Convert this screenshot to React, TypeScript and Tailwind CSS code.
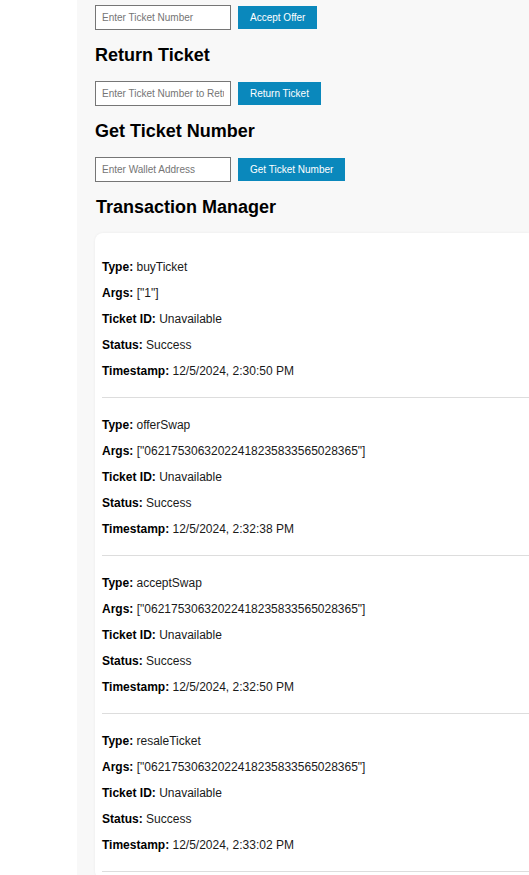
const TRANSACTIONS = [
  { type: "buyTicket", args: '["1"]', ticketId: "Unavailable", status: "Success", timestamp: "12/5/2024, 2:30:50 PM" },
  { type: "offerSwap", args: '["06217530632022418235833565028365"]', ticketId: "Unavailable", status: "Success", timestamp: "12/5/2024, 2:32:38 PM" },
  { type: "acceptSwap", args: '["06217530632022418235833565028365"]', ticketId: "Unavailable", status: "Success", timestamp: "12/5/2024, 2:32:50 PM" },
  { type: "resaleTicket", args: '["06217530632022418235833565028365"]', ticketId: "Unavailable", status: "Success", timestamp: "12/5/2024, 2:33:02 PM" },
];

const inputClass =
  "h-[25px] w-[136px] border border-[#767676] bg-white px-[6px] text-[10px] text-black outline-none placeholder:text-[#757575]";
const buttonClass =
  "h-[23px] bg-[#0a88bc] px-[12px] text-[10px] text-white";
const headingClass = "my-[15px] text-[18px] font-bold leading-[21px] text-black";

function ActionRow({ placeholder, label }: { placeholder: string; label: string }) {
  return (
    <div className="flex items-center gap-[7px]">
      <input type="text" placeholder={placeholder} className={inputClass} />
      <button type="button" className={buttonClass}>
        {label}
      </button>
    </div>
  );
}

function Field({ label, value }: { label: string; value: string }) {
  return (
    <p className="leading-[14px]">
      <span className="font-bold text-black">{label}:</span> {value}
    </p>
  );
}

export default function App() {
  return (
    <div
      className="flex h-[875px] overflow-hidden bg-white text-[12px] text-[#1a1a1a]"
      style={{ fontFamily: '"Liberation Sans", Arial, sans-serif' }}
    >
      <aside className="w-[77px] shrink-0 bg-white" />
      <main className="flex-1 bg-[#f8f8f8] pl-[18px] pt-[5px]">
        <ActionRow placeholder="Enter Ticket Number" label="Accept Offer" />

        <h2 className={headingClass}>Return Ticket</h2>
        <ActionRow placeholder="Enter Ticket Number to Return" label="Return Ticket" />

        <h2 className={headingClass}>Get Ticket Number</h2>
        <ActionRow placeholder="Enter Wallet Address" label="Get Ticket Number" />

        <h2 className={`${headingClass} pl-px`}>Transaction Manager</h2>
        <div className="rounded-l-lg bg-white p-[7px] pr-0 shadow-[0_0_3px_rgba(0,0,0,0.06)]">
          <ul>
            {TRANSACTIONS.map((tx) => (
              <li
                key={tx.timestamp}
                className="flex flex-col gap-[12px] border-b border-[#dddddd] pb-[19px] pt-[20px]"
              >
                <Field label="Type" value={tx.type} />
                <Field label="Args" value={tx.args} />
                <Field label="Ticket ID" value={tx.ticketId} />
                <Field label="Status" value={tx.status} />
                <Field label="Timestamp" value={tx.timestamp} />
              </li>
            ))}
          </ul>
        </div>
      </main>
    </div>
  );
}
